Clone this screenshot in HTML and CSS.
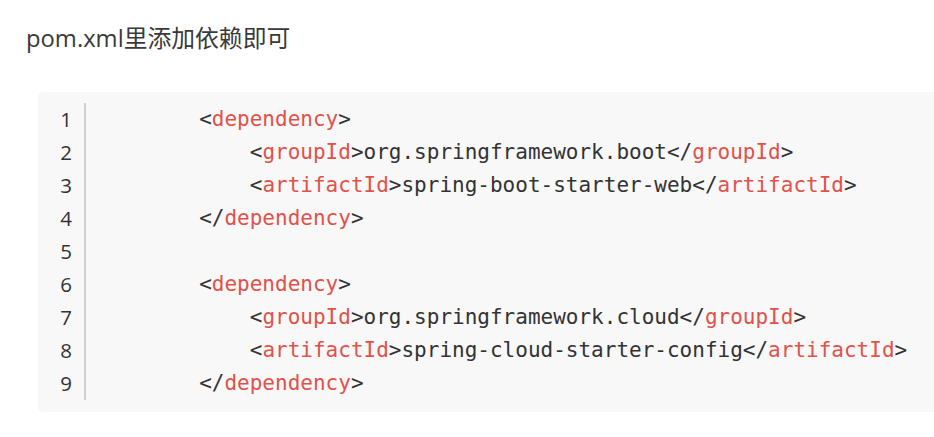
FILE: index.html
```html
<!DOCTYPE html>
<html lang="zh">
<head>
<meta charset="utf-8">
<link rel="stylesheet" href="styles.css">
</head>
<body>
<p class="title">pom.xml里添加依赖即可</p>
<div class="code-block">
  <div class="gutter">
    <span>1</span><span>2</span><span>3</span><span>4</span><span>5</span><span>6</span><span>7</span><span>8</span><span>9</span>
  </div>
<pre class="code"><code>        &lt;<span class="tag">dependency</span>&gt;
            &lt;<span class="tag">groupId</span>&gt;org.springframework.boot&lt;/<span class="tag">groupId</span>&gt;
            &lt;<span class="tag">artifactId</span>&gt;spring-boot-starter-web&lt;/<span class="tag">artifactId</span>&gt;
        &lt;/<span class="tag">dependency</span>&gt;

        &lt;<span class="tag">dependency</span>&gt;
            &lt;<span class="tag">groupId</span>&gt;org.springframework.cloud&lt;/<span class="tag">groupId</span>&gt;
            &lt;<span class="tag">artifactId</span>&gt;spring-cloud-starter-config&lt;/<span class="tag">artifactId</span>&gt;
        &lt;/<span class="tag">dependency</span>&gt;</code></pre>
</div>
</body>
</html>
```
FILE: styles.css
```css
html, body {
  margin: 0;
  padding: 0;
  background: #ffffff;
  overflow: hidden;
}

body {
  font-family: "Open Sans", "Noto Sans CJK SC", sans-serif;
  color: #333333;
}

.title {
  margin: 22px 0 0 26px;
  font-size: 23.8px;
  line-height: 33px;
  color: #3a3a3a;
}

.code-block {
  margin: 37px 0 0 38px;
  background: #f8f8f8;
  border-radius: 5px 0 0 5px;
  display: flex;
  padding: 11px 0 12px 0;
}

.gutter {
  display: flex;
  flex-direction: column;
  align-items: flex-end;
  width: 34px;
  padding-right: 12px;
  border-right: 2px solid #cfcfcf;
  font-family: "Open Sans", sans-serif;
  font-size: 20.5px;
  line-height: 33px;
  color: #333333;
}

.code {
  margin: 0;
  padding-left: 12px;
  font-family: "DejaVu Sans Mono", monospace;
  font-size: 21px;
  line-height: 33px;
  color: #333333;
}

.tag {
  color: #e0524a;
}
```
